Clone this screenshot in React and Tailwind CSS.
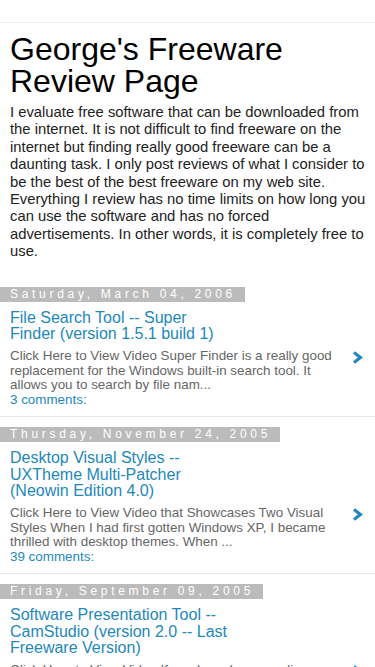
import React from "react";

const posts = [
  {
    date: "Saturday, March 04, 2006",
    title: "File Search Tool -- Super Finder (version 1.5.1 build 1)",
    snippet:
      "Click Here to View Video Super Finder is a really good replacement for the Windows built-in search tool. It allows you to search by file nam...",
    comments: "3 comments:",
  },
  {
    date: "Thursday, November 24, 2005",
    title: "Desktop Visual Styles -- UXTheme Multi-Patcher (Neowin Edition 4.0)",
    snippet:
      "Click Here to View Video that Showcases Two Visual Styles When I had first gotten Windows XP, I became thrilled with desktop themes. When ...",
    comments: "39 comments:",
  },
  {
    date: "Friday, September 09, 2005",
    title: "Software Presentation Tool -- CamStudio (version 2.0 -- Last Freeware Version)",
    snippet:
      "Click Here to View Video If you have been reading my blog for a while you know that I like to show things in action. CamStudio is a ...",
    comments: "12 comments:",
  },
];

const Chevron = () => (
  <svg width="11" height="13" viewBox="0 0 11 13" className="shrink-0">
    <path d="M2 1.5 L8.5 6.5 L2 11.5" fill="none" stroke="#2288bb" strokeWidth="3.2" />
  </svg>
);

const Post = ({ post }) => (
  <div className="border-b border-[#e6e6e6] pt-[10px] pb-[8px]">
    <div className="w-fit bg-[#bbbbbb] pl-[10px] pr-[9px] text-[12px] leading-[15px] tracking-[3.7px] text-white">
      {post.date}
    </div>
    <h3 className="mt-[8px] w-[220px] px-[10px] box-content text-[16px] leading-[16.7px] text-[#2288bb]">
      {post.title}
    </h3>
    <div className="mt-[6px] flex items-start pl-[10px] pr-[12px]">
      <div className="w-[330px] text-[13.4px] leading-[14.7px] text-[#666666]">
        <p>{post.snippet}</p>
        <p className="text-[#2288bb]">{post.comments}</p>
      </div>
      <div className="ml-auto mt-[2px]">
        <Chevron />
      </div>
    </div>
  </div>
);

export default function App() {
  return (
    <div className="min-h-screen bg-white font-['Liberation_Sans',Arial,sans-serif] text-black">
      <div className="h-[23px] border-b border-[#eeeeee]" />
      <div className="pl-[10px] pr-[6px] pt-[10px]">
        <h1 className="text-[32px] leading-[32px]">George's Freeware Review Page</h1>
        <p className="mt-[7px] text-[14.8px] leading-[17.4px] text-[#222222]">
          I evaluate free software that can be downloaded from the internet. It is not
          difficult to find freeware on the internet but finding really good freeware can be
          a daunting task. I only post reviews of what I consider to be the best of the best
          freeware on my web site. Everything I review has no time limits on how long you can
          use the software and has no forced advertisements. In other words, it is completely
          free to use.
        </p>
      </div>
      <div className="mt-[16px]">
        {posts.map((p) => (
          <Post key={p.date} post={p} />
        ))}
      </div>
    </div>
  );
}
